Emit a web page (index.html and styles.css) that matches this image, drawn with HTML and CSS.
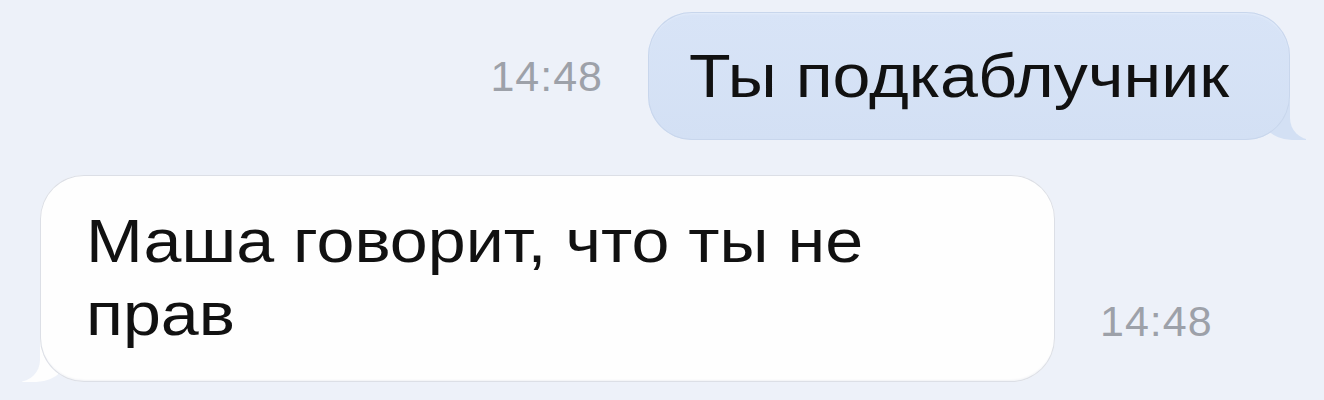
FILE: index.html
```html
<!DOCTYPE html>
<html>
<head>
	<meta charset="utf-8">
	<title>Сообщения</title>
	<link rel="stylesheet" href="styles.css">
</head>
<body>
	<div class="chat">
		<div class="row out">
			<span class="time">14:48</span>
			<div class="bubble sent"><span class="text">Ты подкаблучник</span></div>
		</div>
		<div class="row in">
			<div class="bubble received"><span class="text">Маша говорит, что ты не прав</span></div>
			<span class="time">14:48</span>
		</div>
	</div>
</body>
</html>
```

FILE: styles.css
```css
body {
	margin:0;
	background:#edf1f9;
	font-family:"Liberation Sans", Arial, sans-serif;
}

.chat {
	display:flex;
	flex-direction:column;
	gap:35px;
	padding:12px 34px 0 40px;
}

.row {
	display:flex;
	align-items:center;
}
.row.out {
	justify-content:flex-end;
	gap:45px;
}
.row.in {
	align-items:flex-end;
	gap:45px;
}

.time {
	font-size:43px;
	color:#9da1a9;
	letter-spacing:1px;
}
.row.in .time {
	padding-bottom:36px;
}

.bubble {
	position:relative;
	box-sizing:border-box;
	font-size:62px;
	line-height:73px;
	color:#111;
	border-radius:44px;
}
/* текст на скриншоте чуть растянут по ширине */
.text {
	display:inline-block;
	transform:scaleX(1.1);
	transform-origin:left center;
}

.sent {
	width:642px;
	background:linear-gradient(#d8e4f7, #d3e0f4);
	padding:27px 30px 28px 41px;
	box-shadow:inset 0 0 0 1px #c8d6ec, inset 0 2px 2px #e3ecfa;
}
/* хвостик справа */
.sent::before {
	content:"";
	position:absolute;
	bottom:0;
	right:-16px;
	width:50px;
	height:40px;
	background:#d3e0f4;
	border-bottom-left-radius:36px;
	z-index:-1;
}
.sent::after {
	content:"";
	position:absolute;
	bottom:0;
	right:-24px;
	width:24px;
	height:42px;
	background:#edf1f9;
	border-bottom-left-radius:22px;
}

.received {
	width:1015px;
	background:#fefefe;
	padding:29px 30px 32px 46px;
	box-shadow:inset 0 0 0 1px #dcdfe6, inset 0 -2px 2px #f1f2f5;
}
.received .text {
	width:720px;
}
/* хвостик слева */
.received::before {
	content:"";
	position:absolute;
	bottom:0;
	left:-18px;
	width:50px;
	height:40px;
	background:#fefefe;
	border-bottom-right-radius:36px;
	z-index:-1;
}
.received::after {
	content:"";
	position:absolute;
	bottom:0;
	left:-24px;
	width:24px;
	height:42px;
	background:#edf1f9;
	border-bottom-right-radius:22px;
}
```
